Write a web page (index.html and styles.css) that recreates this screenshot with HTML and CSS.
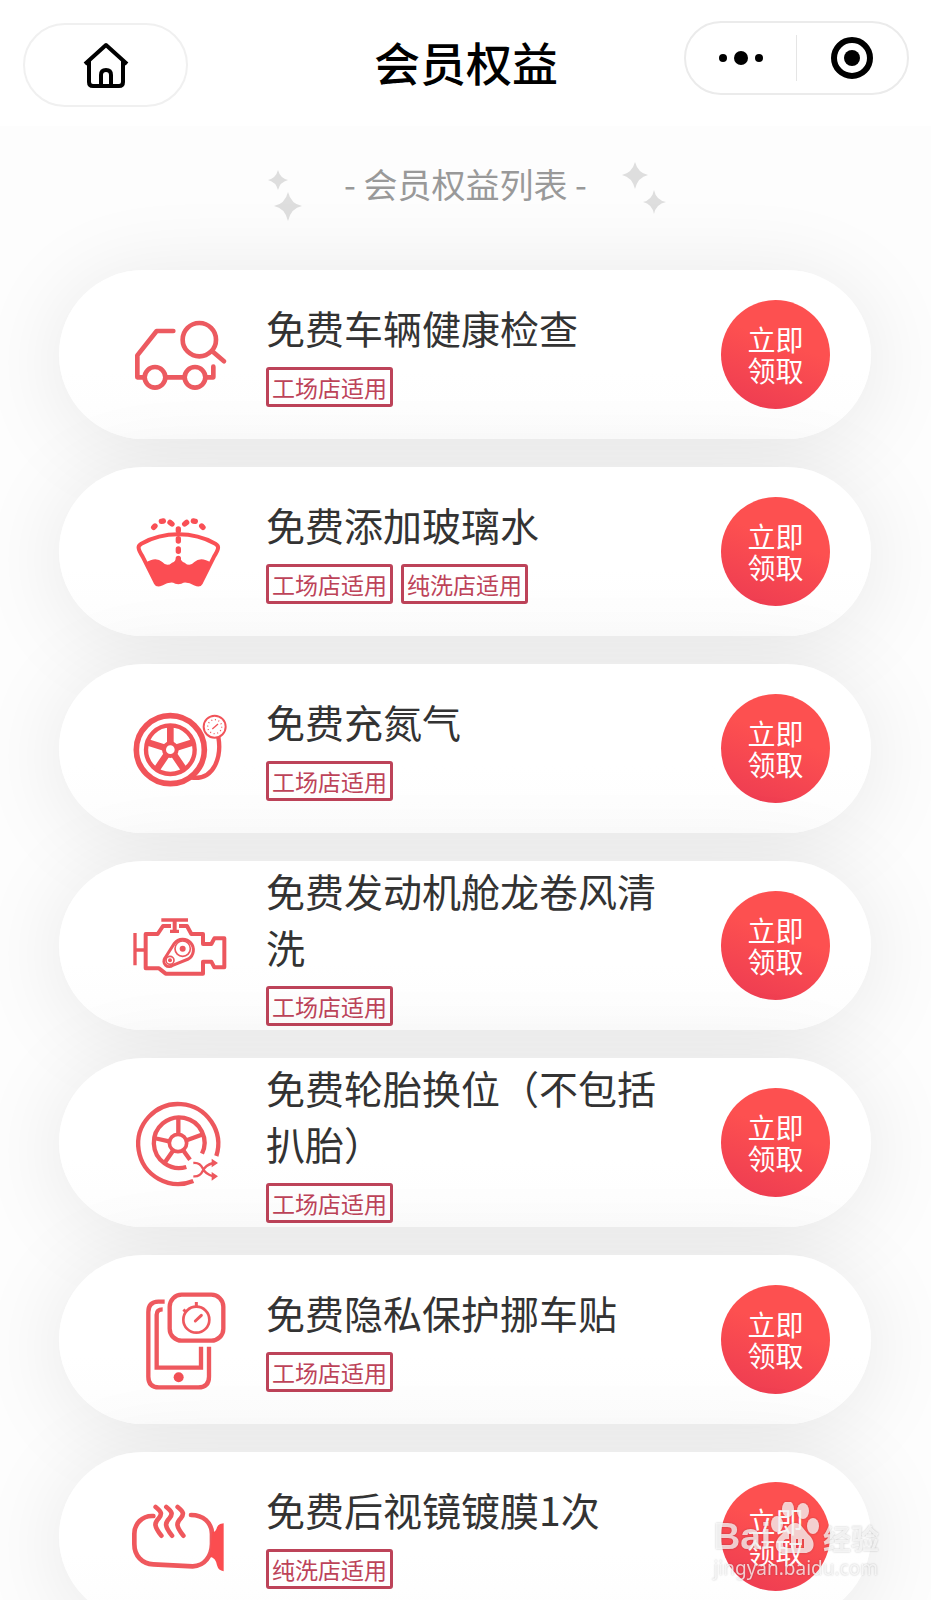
FILE: index.html
```html
<!DOCTYPE html>
<html lang="zh-CN">
<head>
    <meta charset="UTF-8">
    <meta name="viewport" content="width=device-width, initial-scale=1.0">
    <title>会员权益</title>
    <link rel="stylesheet" href="styles.css">
</head>
<body>
    <header class="navbar">
        <a class="home" href="#" aria-label="首页">
            <svg viewBox="0 0 46 46" width="46" height="46">
                <path d="M2 22 L23 3 L44 22 M6 19 V40 Q6 44 10 44 H36 Q40 44 40 40 V19 M18 44 V33 Q18 28 23 28 Q28 28 28 33 V44" fill="none" stroke="#000" stroke-width="4" stroke-linejoin="round"/>
            </svg>
        </a>
        <h1>会员权益</h1>
        <div class="capsule">
            <button type="button" aria-label="更多">
                <svg viewBox="0 0 44 16" width="44" height="16">
                    <circle cx="4" cy="8" r="4"/><circle cx="22" cy="8" r="7"/><circle cx="40" cy="8" r="4"/>
                </svg>
            </button>
            <button type="button" aria-label="关闭">
                <svg viewBox="0 0 42 42" width="42" height="42">
                    <circle cx="21" cy="21" r="18" fill="none" stroke="#000" stroke-width="6"/><circle cx="21" cy="21" r="8"/>
                </svg>
            </button>
        </div>
    </header>

    <main>
        <div class="subtitle">
            <svg class="stars" viewBox="0 0 48 60" width="48" height="60">
                <path d="M14 8 Q16 16 24 18 Q16 20 14 28 Q12 20 4 18 Q12 16 14 8 Z M24 30 Q27 42 38 44 Q27 46 24 59 Q21 46 10 44 Q21 42 24 30 Z"/>
            </svg>
            <h2>- 会员权益列表 -</h2>
            <svg class="stars" viewBox="0 0 48 60" width="48" height="60">
                <path d="M16 0 Q19 11 29 13 Q19 15 16 27 Q13 15 3 13 Q13 11 16 0 Z M35 28 Q37 38 47 40 Q37 42 35 52 Q33 42 24 40 Q33 38 35 28 Z"/>
            </svg>
        </div>

        <ul class="list">
            <li class="card">
                <svg class="icon" viewBox="60 13 300 300">
                    <g fill="none" stroke="#ec5a60" stroke-width="14" stroke-linecap="round" stroke-linejoin="round">
                        <path d="M190 91 H140 L82 164 V230 H100 M170 230 H220 M290 230 H310 V198"/>
                        <circle cx="135" cy="230" r="31"/><circle cx="255" cy="230" r="31"/>
                        <circle cx="268" cy="117" r="50"/><path d="M306 151 L342 182"/>
                    </g>
                </svg>
                <div class="info">
                    <h3>免费车辆健康检查</h3>
                    <div class="tags"><span class="tag">工场店适用</span></div>
                </div>
                <button class="get" type="button">立即<br>领取</button>
            </li>
            <li class="card">
                <svg class="icon" viewBox="60 4 300 300">
                    <path d="M86 143 Q84 135 94 129 Q145 101 205 101 Q265 101 316 129 Q326 135 324 143 Q323 151 312 168 L273 246 Q268 255 256 249 Q237 238 220 240 Q205 250 190 240 Q173 238 154 249 Q142 255 137 246 L98 168 Q87 151 86 143 Z" fill="none" stroke="#fa5055" stroke-width="12"/>
                    <path d="M106 187 Q137 166 157 184 Q171 200 186 186 Q198 182 198 172 H212 Q212 182 224 186 Q239 200 253 184 Q273 166 304 187 L274 250 Q267 260 255 251 Q235 238 212 244 L205 250 L198 244 Q175 238 155 251 Q143 260 136 250 Z" fill="#fb4d53"/>
                    <path d="M205 85 V90 M205 114 V121 M205 145 V152 M205 173 V185" stroke="#f94f55" stroke-width="16" stroke-linecap="round"/>
                    <path d="M131 80 L135 76 M154 62 L160 61 M180 65 L186 70 M279 80 L275 76 M256 62 L250 61 M230 65 L224 70" stroke="#f94f55" stroke-width="16" stroke-linecap="round"/>
                </svg>
                <div class="info">
                    <h3>免费添加玻璃水</h3>
                    <div class="tags"><span class="tag">工场店适用</span><span class="tag">纯洗店适用</span></div>
                </div>
                <button class="get" type="button">立即<br>领取</button>
            </li>
            <li class="card">
                <svg class="icon" viewBox="60 25 300 300">
                    <g fill="none" stroke="#f15359">
                        <circle cx="181" cy="177" r="102" stroke-width="17"/>
                        <circle cx="181" cy="177" r="73" stroke-width="13"/>
                        <circle cx="181" cy="177" r="19" stroke-width="12"/>
                        <path d="M181 105 V158 M113 155 L163 171 M249 155 L199 171 M140 236 L170 192 M222 236 L192 192" stroke-width="20"/>
                        <path d="M325 139 C335 195 315 270 244 261" stroke-width="13"/>
                        <circle cx="314" cy="108" r="33" stroke-width="6"/>
                        <circle cx="314" cy="108" r="21" stroke-width="4" stroke-dasharray="3 8"/>
                        <path d="M307 115 L324 100" stroke-width="4"/>
                    </g>
                </svg>
                <div class="info">
                    <h3>免费充氮气</h3>
                    <div class="tags"><span class="tag">工场店适用</span></div>
                </div>
                <button class="get" type="button">立即<br>领取</button>
            </li>
            <li class="card">
                <svg class="icon" viewBox="60 16 300 300">
                    <g fill="none" stroke="#ec575e" stroke-width="12" stroke-linejoin="round">
                        <path d="M183 106 H159 L143 130 H107 V233 H147 L167 249 H279 V213 H304 L313 230 H343 V143 H313 L304 160 H279 V130 H244 L231 106 H207"/>
                        <path d="M154 88 H234 M180 122 H207 M75 127 V224 M80 178 H102" stroke-width="10"/>
                        <path d="M194 90 V121" stroke-width="12"/>
                        <path d="M193 158 A32 32 0 1 1 235 205 L188 224 A16 16 0 0 1 165 202 Z" stroke-width="9"/>
                        <circle cx="218" cy="174" r="23" stroke-width="5"/>
                        <circle cx="180" cy="209" r="12" stroke-width="5"/>
                    </g>
                    <g fill="#ec575e"><circle cx="218" cy="174" r="9"/><circle cx="180" cy="209" r="6"/></g>
                </svg>
                <div class="info">
                    <h3>免费发动机舱龙卷风清洗</h3>
                    <div class="tags"><span class="tag">工场店适用</span></div>
                </div>
                <button class="get" type="button">立即<br>领取</button>
            </li>
            <li class="card">
                <svg class="icon" viewBox="60 37 300 300">
                    <g fill="none" stroke="#ed575d" stroke-width="13">
                        <path d="M319 226 A120 120 0 1 0 250 301"/>
                        <path d="M276 219 A76 76 0 1 0 229 259"/>
                        <circle cx="204" cy="187" r="26" stroke-width="11"/>
                        <path d="M205 113 V160 M132 172 L177 182 M275 162 L230 179 M165 245 L189 210 M221 211 L240 237"/>
                        <path d="M250 247 Q270 245 278 263 T310 287 M250 287 Q270 289 278 271 T310 247" stroke-width="7"/>
                    </g>
                    <path d="M305 234 L324 247 L305 260 Z M305 274 L324 287 L305 300 Z" fill="#ed575d"/>
                </svg>
                <div class="info">
                    <h3>免费轮胎换位（不包括扒胎）</h3>
                    <div class="tags"><span class="tag">工场店适用</span></div>
                </div>
                <button class="get" type="button">立即<br>领取</button>
            </li>
            <li class="card">
                <svg class="icon" viewBox="60 58 300 300">
                    <g fill="none" stroke="#ee585e" stroke-width="13">
                        <path d="M164 93 H145 Q115 94 115 124 V318 Q115 350 147 350 H265 Q297 350 297 318 V228"/>
                        <path d="M158 116 Q140 116 140 132 V291 H273 V228"/>
                        <rect x="179" y="72" width="161" height="138" rx="36"/>
                        <circle cx="259" cy="147" r="39" stroke-width="8"/>
                        <path d="M256 151 L274 134" stroke-width="9" stroke-linecap="round"/>
                        <path d="M259 94 V108 M220 117 L230 125" stroke-width="9"/>
                    </g>
                    <circle cx="206" cy="320" r="15" fill="#f14f55"/>
                </svg>
                <div class="info">
                    <h3>免费隐私保护挪车贴</h3>
                    <div class="tags"><span class="tag">工场店适用</span></div>
                </div>
                <button class="get" type="button">立即<br>领取</button>
            </li>
            <li class="card">
                <svg class="icon" viewBox="60 19 300 300">
                    <g fill="none" stroke="#ef585d" stroke-width="14" stroke-linecap="round" stroke-linejoin="round">
                        <path d="M130 106 C96 104 73 130 73 160 V190 C73 225 96 250 130 251 L248 257 C285 256 305 225 306 190 V160 C305 125 280 103 243 103"/>
                        <path id="steam" d="M137 79 C155 93 157 101 146 113 C132 127 132 137 154 165"/>
                        <use href="#steam" x="32"/>
                        <use href="#steam" x="66"/>
                    </g>
                    <path d="M306 155 Q318 155 321 140 Q325 129 341 128 V272 Q325 270 321 254 Q318 232 300 228 Z" fill="#fb4d50"/>
                </svg>
                <div class="info">
                    <h3>免费后视镜镀膜1次</h3>
                    <div class="tags"><span class="tag">纯洗店适用</span></div>
                </div>
                <button class="get" type="button">立即<br>领取</button>
            </li>
        </ul>
    </main>

    <div class="watermark">
        <div class="brand">
            <span class="bai">Bai</span>
            <svg class="paw" viewBox="0 0 48 52" width="48" height="52">
                <ellipse cx="17" cy="7" rx="6" ry="8"/><ellipse cx="32" cy="9" rx="6" ry="8"/>
                <ellipse cx="6" cy="22" rx="6" ry="8"/><ellipse cx="42" cy="24" rx="6" ry="8"/>
                <path fill-rule="evenodd" d="M24 21 C31 21 33 29 39 34 C46 42 42 51 34 51 H13 C4 51 2 41 9 34 C15 29 17 21 24 21 Z M20 32 V46 H15 Q12 46 12 42 Q12 37 16 37 H18 V32 Z M25 37 V46 H33 V37 H31 V43 H27 V37 Z"/>
            </svg>
            <span class="jingyan">经验</span>
        </div>
        <div class="site">jingyan.baidu.com</div>
    </div>
</body>
</html>
```
FILE: styles.css
```css
* {
    box-sizing: border-box;
}

body {
    margin: 0;
    height: 100vh;
    overflow: hidden;
    background-color: #fdfdfd;
    color: #333;
    font-family: "Noto Sans CJK SC", sans-serif;
}

h1, h2, h3, ul {
    margin: 0;
    padding: 0;
    font-weight: normal;
}

button {
    padding: 0;
    border: none;
    background: none;
    font-family: inherit;
    cursor: pointer;
}

svg {
    display: block;
    flex-shrink: 0;
}

/* top bar */
.navbar {
    position: relative;
    z-index: 1;
    display: grid;
    grid-template-columns: 1fr auto 1fr;
    align-items: start;
    height: 126px;
    padding: 21px 22px 0 23px;
    background-color: #fff;
}

.home {
    display: flex;
    align-items: center;
    justify-content: center;
    width: 165px;
    height: 84px;
    margin-top: 2px;
    border: 2px solid #f0f0f0;
    border-radius: 42px;
}

.navbar h1 {
    color: #000;
    font-size: 46px;
    font-weight: 500;
    line-height: 80px;
}

.capsule {
    display: flex;
    justify-self: end;
    align-items: center;
    width: 225px;
    height: 74px;
    border: 2px solid #ebebeb;
    border-radius: 37px;
}

.capsule button {
    display: flex;
    flex: 1;
    align-items: center;
    justify-content: center;
    height: 46px;
}

.capsule button + button {
    border-left: 1px solid #e5e5e5;
}

/* heading with stars */
.subtitle {
    display: flex;
    align-items: flex-start;
    justify-content: center;
    gap: 32px;
    padding-top: 36px;
}

.subtitle h2 {
    color: #999;
    font-size: 34px;
    line-height: 44px;
}

.stars {
    fill: #dedede;
}

/* benefits */
.list {
    display: flex;
    flex-direction: column;
    gap: 28px;
    padding: 48px 60px 0 59px;
    list-style: none;
}

.card {
    display: flex;
    flex-shrink: 0;
    align-items: center;
    height: 169px;
    padding: 0 41px 0 71px;
    border-radius: 85px;
    background: linear-gradient(#fff 60%, #fdfdfd);
    box-shadow: 0 8px 90px rgba(0, 0, 0, 0.09);
}

.icon {
    width: 100px;
    height: 100px;
    overflow: visible;
}

.info {
    flex: 1;
    padding: 0 36px 4px;
}

.info h3 {
    font-size: 39px;
    line-height: 56px;
}

.tags {
    display: flex;
    gap: 8px;
    padding-top: 12px;
}

.tag {
    padding: 0 3px;
    border: 3px solid #bd4359;
    border-radius: 3px;
    color: #bd4359;
    font-size: 23px;
    line-height: 34px;
    white-space: nowrap;
}

.get {
    flex-shrink: 0;
    width: 109px;
    height: 109px;
    border-radius: 50%;
    background: linear-gradient(20deg, #ec3a52, #fd5050 60%);
    color: #fff;
    font-size: 28px;
    line-height: 31px;
}

/* watermark */
.watermark {
    position: fixed;
    right: 52px;
    bottom: 18px;
    z-index: 2;
    color: rgba(255, 255, 255, 0.75);
    text-shadow: 0 0 2px rgba(0, 0, 0, 0.25);
    pointer-events: none;
}

.brand {
    display: flex;
    align-items: flex-end;
}

.bai {
    font-family: "Liberation Sans", sans-serif;
    font-size: 37px;
    font-weight: bold;
    line-height: 34px;
}

.paw {
    fill: rgba(255, 255, 255, 0.75);
    filter: drop-shadow(0 0 1px rgba(0, 0, 0, 0.25));
}

.jingyan {
    padding-left: 4px;
    font-size: 28px;
    font-weight: bold;
    line-height: 32px;
}

.site {
    font-family: "Noto Sans", sans-serif;
    font-size: 19px;
    line-height: 28px;
}
```
